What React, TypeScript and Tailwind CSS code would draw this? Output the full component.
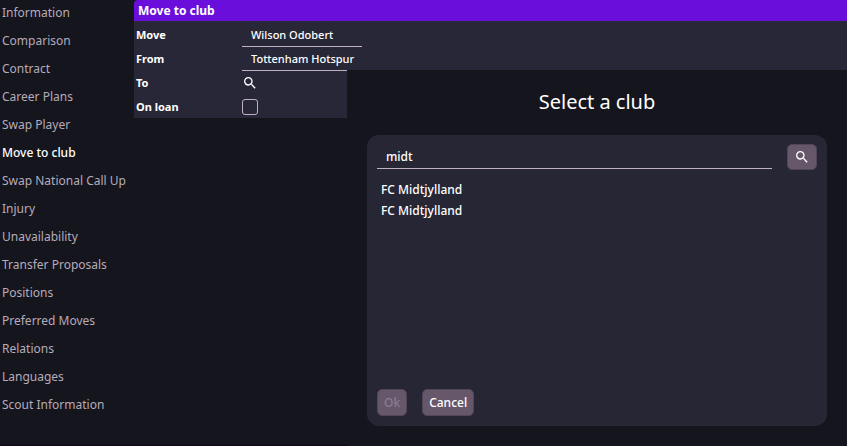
import { useState } from "react";
import { MdSearch } from "react-icons/md";

const MENU_ITEMS = [
  "Information",
  "Comparison",
  "Contract",
  "Career Plans",
  "Swap Player",
  "Move to club",
  "Swap National Call Up",
  "Injury",
  "Unavailability",
  "Transfer Proposals",
  "Positions",
  "Preferred Moves",
  "Relations",
  "Languages",
  "Scout Information",
];

const CLUBS = [
  { id: 1, name: "FC Midtjylland" },
  { id: 2, name: "FC Midtjylland" },
];

const BUTTON_CLASS =
  "rounded-[5px] border border-[#514659] bg-[#66576b] px-1.5 text-xs font-medium";

function Sidebar({ active }: { active: string }) {
  return (
    <nav className="w-[134px] shrink-0 pl-0.5">
      <ul className="flex flex-col gap-0.5">
        {MENU_ITEMS.map((item) => (
          <li key={item} className="text-xs/[26px] whitespace-nowrap">
            <a
              href="#"
              className={item === active ? "block font-medium text-white" : "block text-[#b5abb9]"}
            >
              {item}
            </a>
          </li>
        ))}
      </ul>
    </nav>
  );
}

function TextRow({ id, label, value }: { id: string; label: string; value: string }) {
  return (
    <div className="flex h-6 items-stretch">
      <label htmlFor={id} className="w-[106px] text-[11px]/6 font-bold">
        {label}
      </label>
      <input
        id={id}
        readOnly
        value={value}
        className="w-[120px] border-b border-[#bfb0c4] pt-0.5 pl-[9px] text-[11px] font-medium outline-none"
      />
    </div>
  );
}

function MoveForm() {
  return (
    <form className="bg-[#272738] pt-0.5 pl-0.5">
      <TextRow id="move" label="Move" value="Wilson Odobert" />
      <TextRow id="from" label="From" value="Tottenham Hotspur" />
      <div className="flex h-6 items-center">
        <span className="w-[106px] text-[11px]/6 font-bold">To</span>
        <button type="button" aria-label="Find club">
          <MdSearch className="size-4" />
        </button>
      </div>
      <div className="flex h-[23px] items-center">
        <label htmlFor="loan" className="w-[106px] text-[11px]/6 font-bold">
          On loan
        </label>
        <input
          id="loan"
          type="checkbox"
          className="size-4 appearance-none rounded-[3px] border border-[#bfb0c4] checked:bg-[#6a0fdb]"
        />
      </div>
    </form>
  );
}

function ClubDialog() {
  const [query, setQuery] = useState("midt");

  return (
    <div
      role="dialog"
      aria-labelledby="dialog-title"
      className="absolute top-[70px] right-0 left-[213px] bg-[#15151e] px-5 pt-4 pb-5"
    >
      <h2 id="dialog-title" className="text-center text-xl/8">
        Select a club
      </h2>
      <div className="mt-[17px] flex min-h-[291px] flex-col rounded-xl bg-[#262635] px-2.5 pt-[9px] pb-2.5">
        <div className="flex items-start gap-[15px]">
          <input
            aria-label="Club name"
            value={query}
            onChange={(e) => setQuery(e.target.value)}
            className="h-[25px] min-w-0 flex-1 border-b border-[#bfb0c4] pl-[9px] text-xs font-medium outline-none"
          />
          <button type="button" aria-label="Search" className={`${BUTTON_CLASS} h-[26px]`}>
            <MdSearch className="size-4" />
          </button>
        </div>
        <ul className="mt-[9px] flex-1 pl-1">
          {CLUBS.map((club) => (
            <li key={club.id} className="flex">
              <button type="button" className="text-xs/[21px] font-medium">
                {club.name}
              </button>
            </li>
          ))}
        </ul>
        <div className="flex gap-[15px]">
          <button type="button" disabled className={`${BUTTON_CLASS} h-[27px] text-[#8b7e90]`}>
            Ok
          </button>
          <button type="button" className={`${BUTTON_CLASS} h-[27px]`}>
            Cancel
          </button>
        </div>
      </div>
    </div>
  );
}

export default function App() {
  return (
    <div className="flex min-h-screen border-b border-[#100613] bg-[#15151e] font-['Noto_Sans',sans-serif] text-white">
      <Sidebar active="Move to club" />
      <main className="relative min-w-0 flex-1">
        <h1 className="rounded-tl bg-[#6a0fdb] pl-1 text-xs/[21px] font-bold">Move to club</h1>
        <MoveForm />
        <ClubDialog />
      </main>
    </div>
  );
}
